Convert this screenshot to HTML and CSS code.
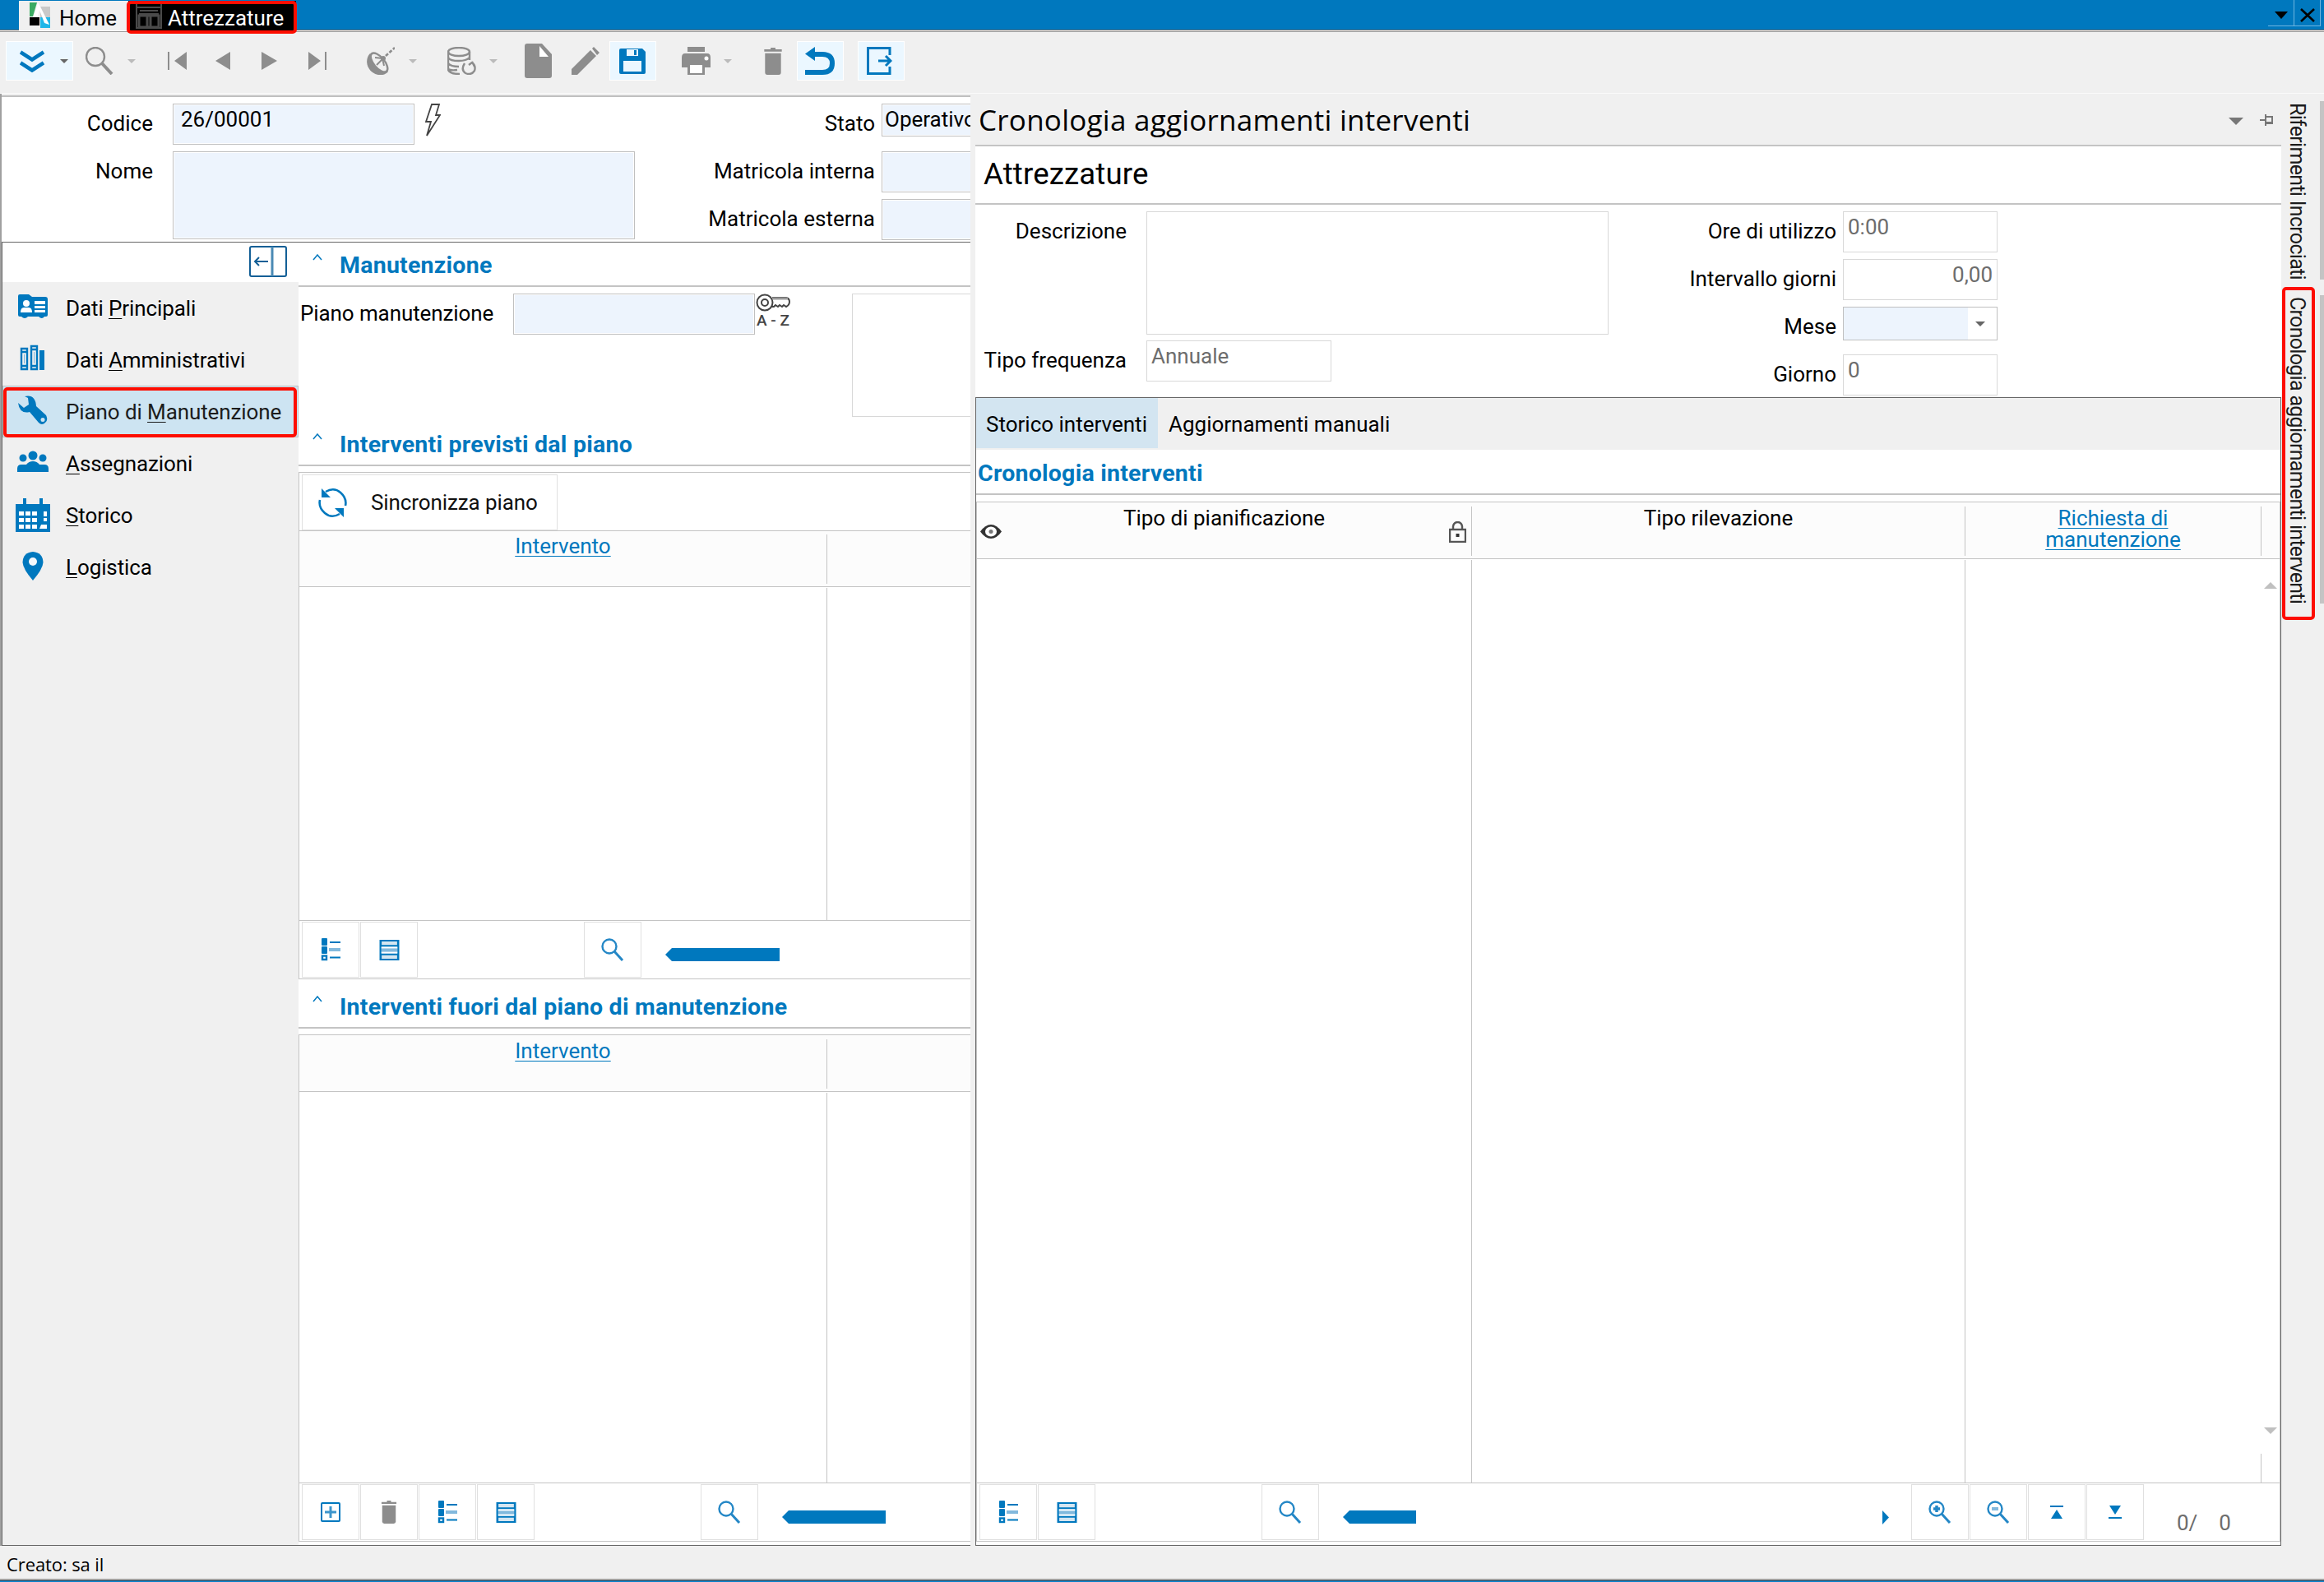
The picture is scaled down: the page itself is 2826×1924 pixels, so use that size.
FILE: index.html
```html
<!DOCTYPE html>
<html lang="it">
<head>
    <meta charset="UTF-8">
    <meta name="viewport" content="width=device-width, initial-scale=1.0">
    <title>Attrezzature</title>
    <link rel="stylesheet" href="styles.css">
</head>
<body>
    <!-- Icons used more than once -->
    <svg class="sprite">
        <symbol id="i-list" viewBox="0 0 24 28">
            <path d="M2 1h5v7H2zM2 11h5v7H2z" fill="#0078be" stroke="#0078be" stroke-width="2" stroke-linejoin="round"/>
            <rect x="2" y="21.500" width="5" height="4.500" fill="none" stroke="#0078be" stroke-width="2.400"/>
            <path d="M11 5h13M11 23.500h13" stroke="#0078be" stroke-width="2"/>
            <path d="M10 14h14" stroke="#82b9dd" stroke-width="4"/>
        </symbol>
        <symbol id="i-table" viewBox="0 0 24 24">
            <path d="M2 1h20v22H2z" fill="#d5e6f1" stroke="#0078be" stroke-width="2"/>
            <path d="M2 10h20M2 14h20" stroke="#fff" stroke-width="4"/>
            <path d="M2 12h20" stroke="#82b9dd" stroke-width="4"/>
            <path d="M1 7h22M1 17h22" stroke="#0078be" stroke-width="2"/>
            <path d="M1.500 0v24M22.500 0v24" stroke="#0078be" stroke-width="2"/>
        </symbol>
        <symbol id="i-search" viewBox="0 0 28 28">
            <circle cx="10" cy="10" r="8.500" fill="none" stroke="#2487c6" stroke-width="2.400"/>
            <path d="M16 16l10 11" stroke="#2487c6" stroke-width="3"/>
        </symbol>
        <symbol id="i-trash" viewBox="0 0 24 34">
            <path d="M9 0h6v2h8v3H1V2h8z" fill="#8d8d8d"/>
            <path d="M2 7h20v24q0 3-3 3H5q-3 0-3-3z" fill="#8d8d8d"/>
        </symbol>
    </svg>

    <!-- Document tabs -->
    <header class="titlebar">
        <div class="tab">
            <svg width="25" height="31" viewBox="0 0 25 31"><path d="M0 0h9L4 17H0z" fill="#3bab62"/><path d="M13 5h12v13H13z" fill="#c9c9c9"/><path d="M0 18h12v10H0z" fill="#000"/><path d="M13 18h12v13H13z" fill="#1fb6e8"/><path d="M10 0L5 17h5l2-8 6 16 6 2L13 5z" fill="#fff"/></svg>
            <span>Home</span>
        </div>
        <div class="tab tab-active">
            <svg width="32" height="30" viewBox="0 0 32 30" fill="none" stroke="#4a4a4a" stroke-width="2"><path d="M1 0v29h30V0M1 4h30M5 8h22M4 12h24"/><path d="M4 14h24v14H4zM14 14v14M18 14v14" stroke-width="3"/></svg>
            <span>Attrezzature</span>
        </div>
        <div class="win-buttons">
            <div class="win-button"><svg width="16" height="9" viewBox="0 0 16 9"><path d="M0 0h16L8 9z"/></svg></div>
            <div class="win-button"><svg width="18" height="17" viewBox="0 0 18 17" fill="none" stroke="#000" stroke-width="2.600"><path d="M1 1l16 15M17 1L1 16"/></svg></div>
        </div>
    </header>

    <!-- Main toolbar -->
    <nav class="toolbar">
        <div class="tool tool-on tool-menu">
            <svg width="30" height="27" viewBox="0 0 30 27" fill="none" stroke="#0078be" stroke-width="4.600"><path d="M1 2.500l14 9 14-9M1 15.500l14 9 14-9"/></svg>
            <i class="caret dark"></i>
        </div>
        <div class="tool tool-find">
            <svg width="34" height="34" viewBox="0 0 34 34" fill="none" stroke="#8d8d8d"><circle cx="12" cy="12" r="11" stroke-width="2.400"/><path d="M20 20l12 13" stroke-width="4"/></svg>
            <i class="caret"></i>
        </div>
        <svg class="tool-first" width="23" height="22" viewBox="0 0 23 22" fill="#8d8d8d"><path d="M0 0h2v22H0zM23 0v22L8 11z"/></svg>
        <svg class="tool-prev" width="18" height="22" viewBox="0 0 18 22" fill="#8d8d8d"><path d="M18 0v22L0 11z"/></svg>
        <svg class="tool-next" width="19" height="22" viewBox="0 0 19 22" fill="#8d8d8d"><path d="M0 0l19 11L0 22z"/></svg>
        <svg class="tool-last" width="22" height="22" viewBox="0 0 22 22" fill="#8d8d8d"><path d="M0 0l15 11L0 22zM20 0h2v22h-2z"/></svg>
        <div class="tool tool-dish">
            <svg width="34" height="34" viewBox="0 0 34 34"><path d="M4 8C-2 14-1 25 7 31c7 5 15 4 19-1z" fill="#8d8d8d"/><ellipse cx="15" cy="19" rx="6.500" ry="14" transform="rotate(-40 15 19)" fill="#f0f0f0" stroke="#8d8d8d" stroke-width="2.400"/><path d="M12 22l8-8M10 13l9 1 2 9" fill="none" stroke="#8d8d8d" stroke-width="2"/><circle cx="20" cy="14" r="3" fill="#8d8d8d"/><path d="M23 11L34 1" stroke="#8d8d8d" stroke-width="2.600" stroke-dasharray="4 2"/></svg>
            <i class="caret"></i>
        </div>
        <div class="tool tool-db">
            <svg width="35" height="34" viewBox="0 0 35 34" fill="none" stroke="#8d8d8d" stroke-width="2.400"><ellipse cx="14" cy="6" rx="13" ry="5"/><path d="M1 6v22q2 5 14 5M27 6v10M1 13q2 4 13 4 9 0 13-4M1 20q3 4 13 4M1 27q3 2 11 1"/><path d="M21 20q-5 8 1 12 7 3 11-3 2-6-3-10l-4 3m4-4l3 6"/></svg>
            <i class="caret"></i>
        </div>
        <svg class="tool-doc" width="33" height="42" viewBox="0 0 33 42"><path d="M3 0h18l12 13v26q0 3-3 3H3q-3 0-3-3V3q0-3 3-3z" fill="#8d8d8d"/><path d="M18 3l11 13H18z" fill="#fff"/></svg>
        <svg class="tool-pen" width="35" height="34" viewBox="0 0 35 34" fill="#8d8d8d"><path d="M0 34v-7L23 4l7 7L7 34zM25 2l2-2 7 7-3 3z"/></svg>
        <div class="tool tool-on tool-save">
            <svg width="32" height="31" viewBox="0 0 32 31"><path d="M2 0h26l4 4v25q0 2-2 2H2q-2 0-2-2V2q0-2 2-2z" fill="#0078be"/><path d="M9 1h14v8H9zM5 15h22v13H5z" fill="#ebf7ff"/><path d="M18 2h3v6h-3z" fill="#0078be"/></svg>
        </div>
        <div class="tool tool-print">
            <svg width="35" height="34" viewBox="0 0 35 34"><path d="M7 0h21v6H7zM4 8h27q4 0 4 5v12h-7v9H7v-9H0V13q0-5 4-5z" fill="#8d8d8d"/><path d="M10 22h15v10H10z" fill="#fff"/><circle cx="30" cy="14" r="2.500" fill="#fff"/></svg>
            <i class="caret"></i>
        </div>
        <svg class="tool-trash" width="24" height="33"><use href="#i-trash"/></svg>
        <div class="tool tool-on tool-undo">
            <svg width="36" height="35" viewBox="0 0 36 35"><path d="M0 8.500L12 0v17z" fill="#0078be"/><path d="M9 9h12q12 0 12 11t-12 11H0" fill="none" stroke="#0078be" stroke-width="6"/></svg>
        </div>
        <div class="tool tool-on tool-exit">
            <svg width="31" height="34" viewBox="0 0 31 34" fill="none" stroke="#0078be" stroke-width="3"><path d="M28 10V1.500H1.500v31H28V24"/><path d="M14 17h15M23 11l6 6-6 6" /></svg>
        </div>
    </nav>

    <main class="main">
        <section class="left">
            <!-- Record header -->
            <div class="record">
                <label class="label">Codice</label>
                <div class="code-cell">
                    <div class="input code">26/00001</div>
                    <svg width="19" height="41" viewBox="0 0 19 41" fill="none" stroke="#444" stroke-width="1.800"><path d="M8 1h9l-4 13h5L2 39l5-17H1z"/></svg>
                </div>
                <label class="label near">Stato</label>
                <div class="input state">Operativo</div>
                <label class="label">Nome</label>
                <div class="input name"></div>
                <label class="label near">Matricola interna</label>
                <div class="input cut"></div>
                <label class="label near">Matricola esterna</label>
                <div class="input cut"></div>
            </div>

            <div class="work">
                <aside class="sidebar">
                    <div class="collapse">
                        <svg width="46" height="38" viewBox="0 0 46 38" fill="none" stroke="#135f96" stroke-width="2"><rect x="1" y="1" width="44" height="36" rx="2"/><path d="M28 1v36" stroke="#4a8ab4" stroke-width="3"/><path d="M7 19h16M12 14l-5 5 5 5"/></svg>
                    </div>
                    <a class="item">
                        <svg width="42" height="42" viewBox="0 0 42 42"><path d="M3 6q0-2 2-2h11l4 3h16q3 0 3 3v19q0 2-2 2h-2q-3 4-7 0H15q-4 4-8 0H5q-2 0-2-2z" fill="#0078be"/><circle cx="13" cy="15" r="4" fill="#fff"/><path d="M6 26q0-6 4-6h6q4 0 4 6zM23 12h13v4H23zM23 18h13v3H23zM23 23h13v3H23z" fill="#fff"/></svg>
                        <span>Dati <u>P</u>rincipali</span>
                    </a>
                    <a class="item">
                        <svg width="42" height="42" viewBox="0 0 42 42" fill="none" stroke="#0078be" stroke-width="2.400"><path d="M7 7h7v25H7zM19 4h7v28h-7zM7 11h7M7 28h7M19 8h7M19 28h7"/><path d="M32 9v24" stroke-width="6"/><path d="M10.500 14v11M22.500 11v14" stroke="#7ab5db" stroke-width="1"/></svg>
                        <span>Dati <u>A</u>mministrativi</span>
                    </a>
                    <a class="item item-on">
                        <svg width="42" height="42" viewBox="0 0 42 42"><path d="M3 10l7 6 6-4-1-8-4-2Q24-1 25 14l12 11q3 6-1 9-4 4-8 0L17 21Q5 24 3 10z" fill="#0078be"/><circle cx="33" cy="30.500" r="2.500" fill="#cde4f2"/></svg>
                        <span>Piano di <u>M</u>anutenzione</span>
                    </a>
                    <a class="item">
                        <svg width="42" height="42" viewBox="0 0 42 42" fill="#0078be"><circle cx="21" cy="11" r="5.500"/><circle cx="9" cy="14" r="4.500"/><circle cx="33" cy="14" r="4.500"/><path d="M2 31v-4q0-5 5-5h6q3-4 8-4t8 4h6q5 0 5 5v4z"/></svg>
                        <span><u>A</u>ssegnazioni</span>
                    </a>
                    <a class="item">
                        <svg width="42" height="42" viewBox="0 0 42 42"><path d="M0 7h9V0h4v7h16V0h4v7h9v34H0z" fill="#0078be"/><path d="M4 16h6v5H4zM12 16h6v5h-6zM20 16h6v5h-6zM4 24h6v5H4zM12 24h6v5h-6zM20 24h6v5h-6zM4 32h6v5H4zM12 32h6v5h-6zM20 32h6v5h-6zM34 16h4v6h-4zM34 24h4v4h-4zM31 32h7v5h-9z" fill="#fff"/></svg>
                        <span><u>S</u>torico</span>
                    </a>
                    <a class="item">
                        <svg width="42" height="42" viewBox="0 0 42 42"><path d="M21 2q12 1 12.500 13Q33 23 21 37 9 23 8.500 15 9 3 21 2z" fill="#0078be"/><circle cx="21" cy="14" r="5" fill="#f4f8fb"/></svg>
                        <span><u>L</u>ogistica</span>
                    </a>
                </aside>

                <div class="content">
                    <h2 class="section"><svg width="12" height="8" viewBox="0 0 12 8"><path d="M1 7l5-6 5 6"/></svg>Manutenzione</h2>
                    <div class="plan">
                        <label class="plan-label">Piano manutenzione</label>
                        <div class="input plan-input"></div>
                        <div class="key">
                            <svg width="42" height="22" viewBox="0 0 42 22" fill="none" stroke="#444" stroke-width="2"><circle cx="11" cy="11" r="9.500"/><circle cx="11" cy="11" r="4"/><path d="M20 5h17q4 1 4 5t-4 6l-3-2-2 2-3-2-2 2-3-2-2 2h-3"/><path d="M20 6h19" stroke="#999" stroke-width="3"/></svg>
                            <span>A - Z</span>
                        </div>
                        <div class="plan-note"></div>
                    </div>

                    <h2 class="section"><svg width="12" height="8" viewBox="0 0 12 8"><path d="M1 7l5-6 5 6"/></svg>Interventi previsti dal piano</h2>
                    <div class="grid grid-top">
                        <div class="grid-actions">
                            <button class="sync">
                                <svg width="37" height="37" viewBox="0 0 37 37" fill="none" stroke="#0078be" stroke-width="2.600"><path d="M10 5q10-6 18 1 8 7 6 16M27 32q-10 6-18-1-8-7-6-16"/><path d="M5 1v11h11zM32 36V25H21z" fill="#0078be" stroke="none"/></svg>
                                Sincronizza piano
                            </button>
                        </div>
                        <div class="grid-head"><div class="th w-int"><a class="link">Intervento</a></div></div>
                        <div class="grid-body"><div class="td w-int"></div></div>
                        <div class="grid-foot">
                            <button class="gbtn"><svg width="24" height="28"><use href="#i-list"/></svg></button>
                            <button class="gbtn"><svg width="25" height="25"><use href="#i-table"/></svg></button>
                            <button class="gbtn gap-a"><svg width="28" height="28"><use href="#i-search"/></svg></button>
                            <div class="scroll scroll-a"></div>
                        </div>
                    </div>

                    <h2 class="section"><svg width="12" height="8" viewBox="0 0 12 8"><path d="M1 7l5-6 5 6"/></svg>Interventi fuori dal piano di manutenzione</h2>
                    <div class="grid grid-bottom">
                        <div class="grid-head"><div class="th w-int"><a class="link">Intervento</a></div></div>
                        <div class="grid-body"><div class="td w-int"></div></div>
                        <div class="grid-foot">
                            <button class="gbtn"><svg width="24" height="24" viewBox="0 0 24 24" fill="none" stroke="#0078be" stroke-width="2"><rect x="1" y="1" width="22" height="22" rx="1"/><path d="M12 5v14M5 12h14" stroke="#3d95cc" stroke-width="3"/></svg></button>
                            <button class="gbtn"><svg width="22" height="28"><use href="#i-trash"/></svg></button>
                            <button class="gbtn"><svg width="24" height="28"><use href="#i-list"/></svg></button>
                            <button class="gbtn"><svg width="25" height="25"><use href="#i-table"/></svg></button>
                            <button class="gbtn gap-a"><svg width="28" height="28"><use href="#i-search"/></svg></button>
                            <div class="scroll scroll-b"></div>
                        </div>
                    </div>
                </div>
            </div>
        </section>

        <!-- Docked panel -->
        <section class="panel">
            <div class="panel-title">
                <span>Cronologia aggiornamenti interventi</span>
                <svg class="panel-caret" width="18" height="9" viewBox="0 0 18 9"><path d="M0 0h18L9 9z" fill="#777"/></svg>
                <svg width="16" height="14" viewBox="0 0 16 14" fill="none" stroke="#777" stroke-width="2"><path d="M0 7h6M7 0v14M8 3h7v8H8"/><path d="M8 10.500h8" stroke-width="3"/></svg>
            </div>
            <div class="panel-name">Attrezzature</div>
            <div class="panel-form">
                <label class="label">Descrizione</label>
                <div class="field desc"></div>
                <label class="label near">Ore di utilizzo</label>
                <div class="field">0:00</div>
                <label class="label near">Intervallo giorni</label>
                <div class="field right">0,00</div>
                <label class="label near">Mese</label>
                <div class="select"><i></i></div>
                <label class="label freq">Tipo frequenza</label>
                <div class="field freq-field">Annuale</div>
                <label class="label near">Giorno</label>
                <div class="field">0</div>
            </div>
            <div class="panel-box">
                <div class="subtabs">
                    <div class="subtab subtab-on">Storico interventi</div>
                    <div class="subtab">Aggiornamenti manuali</div>
                </div>
                <h2 class="panel-section">Cronologia interventi</h2>
                <div class="grid grid-hist">
                    <div class="grid-head">
                        <div class="th w-tipo">
                            <svg class="eye" width="26" height="17" viewBox="0 0 26 17"><path d="M0 8.500Q6 0 13 0t13 8.500Q20 17 13 17T0 8.500z" fill="#333"/><ellipse cx="13" cy="8.500" rx="7" ry="6" fill="#fff"/><circle cx="13" cy="8.500" r="2.500" fill="#777"/></svg>
                            Tipo di pianificazione
                            <svg class="lock" width="21" height="26" viewBox="0 0 21 26" fill="none" stroke="#555" stroke-width="2.400"><rect x="1" y="10" width="19" height="15"/><path d="M5 10V6q1-5 5.500-5T16 6v4"/><rect x="8.500" y="15" width="4" height="4" fill="#333" stroke="none"/></svg>
                        </div>
                        <div class="th w-ril">Tipo rilevazione</div>
                        <div class="th w-rich"><a class="link">Richiesta di<br>manutenzione</a></div>
                    </div>
                    <div class="grid-body">
                        <div class="td w-tipo"></div>
                        <div class="td w-ril"></div>
                        <div class="td w-rich"></div>
                        <div class="vscroll">
                            <svg width="16" height="8" viewBox="0 0 16 8"><path d="M0 8h16L8 0z" fill="#c0c0c0"/></svg>
                            <svg width="16" height="8" viewBox="0 0 16 8"><path d="M0 0h16L8 8z" fill="#c0c0c0"/></svg>
                        </div>
                    </div>
                    <div class="grid-foot">
                        <button class="gbtn"><svg width="24" height="28"><use href="#i-list"/></svg></button>
                        <button class="gbtn"><svg width="25" height="25"><use href="#i-table"/></svg></button>
                        <button class="gbtn gap-a"><svg width="28" height="28"><use href="#i-search"/></svg></button>
                        <div class="scroll scroll-c"></div>
                        <svg class="scroll-end" width="8" height="17" viewBox="0 0 8 17"><path d="M0 0l8 8.500L0 17z" fill="#0078be"/></svg>
                        <button class="gbtn"><svg width="28" height="28" viewBox="0 0 28 28" fill="none" stroke="#2487c6"><circle cx="10" cy="10" r="8.500" stroke-width="2.400"/><path d="M16 16l10 11" stroke-width="3"/><path d="M10 6v8M6 10h8" stroke-width="3.500"/></svg></button>
                        <button class="gbtn"><svg width="28" height="28" viewBox="0 0 28 28" fill="none" stroke="#2487c6"><circle cx="10" cy="10" r="8.500" stroke-width="2.400"/><path d="M16 16l10 11" stroke-width="3"/><path d="M6 10h8" stroke="#82b9dd" stroke-width="4"/></svg></button>
                        <button class="gbtn"><svg width="16" height="16" viewBox="0 0 16 16" fill="#0078be"><path d="M0 0h16v2H0zM8 5l7 11H1z"/></svg></button>
                        <button class="gbtn"><svg width="16" height="16" viewBox="0 0 16 16" fill="#0078be"><path d="M0 14h16v2H0zM8 11l7-11H1z"/></svg></button>
                        <div class="count"><span>0/</span><span>0</span></div>
                    </div>
                </div>
            </div>
        </section>

        <!-- Side tabs -->
        <aside class="sidetabs">
            <div class="sidetab first"><span>Riferimenti Incrociati</span></div>
            <div class="sidetab second"><span>Cronologia aggiornamenti interventi</span></div>
        </aside>
    </main>

    <footer class="status">Creato: sa il</footer>
</body>
</html>
```

FILE: styles.css
```css
*,
*::after {
    box-sizing: border-box;
}
body {
    margin: 0;
    width: 2826px;
    height: 1924px;
    overflow: hidden;
    display: flex;
    flex-direction: column;
    background-color: #f0f0f0;
    color: #000;
    font-family: Roboto, sans-serif;
    font-size: 26px;
    line-height: 30px;
}
svg {
    display: block;
    flex: none;
}
.sprite {
    position: absolute;
    width: 0;
    height: 0;
}
h2 {
    margin: 0;
}
button {
    font: inherit;
    color: #111;
    padding: 0;
}

/* title bar */
.titlebar {
    height: 39px;
    flex: none;
    display: flex;
    padding-left: 23px;
    background: linear-gradient(#0078be 36px, #666 36px, #666 37px, #fff 37px, #fff 38px, #999 38px);
}
.tab {
    position: relative;
    width: 133px;
    height: 36px;
    margin-top: 1px;
    display: flex;
    padding-left: 13px;
    background-color: #f0f0f0;
}
.tab svg {
    margin-top: 2px;
}
.tab span {
    margin: 6px 0 0 11px;
}
.tab-active {
    width: 204px;
    padding-left: 9px;
    background-color: #000;
    color: #fff;
}
.tab-active svg {
    margin-top: 4px;
}
.tab-active span {
    margin-left: 7px;
}
.tab-active::after {
    content: "";
    position: absolute;
    left: -2px;
    top: 0;
    width: 207px;
    height: 40px;
    border: 4px solid #fd0d00;
    border-radius: 5px;
}
.win-buttons {
    margin-left: auto;
    margin-right: 4px;
    display: flex;
    height: 32px;
}
.win-button {
    width: 32px;
    display: flex;
    align-items: center;
    justify-content: center;
    padding-top: 5px;
    border-right: 1px solid #6fb5e0;
    border-bottom: 1px solid #6fb5e0;
}

/* toolbar */
.toolbar {
    height: 75px;
    flex: none;
    display: flex;
    align-items: center;
    padding: 0 0 4px 7px;
    border-bottom: 1px solid #fafafa;
}
.tool {
    height: 48px;
    display: flex;
    align-items: center;
}
.tool-on {
    background-color: #ebf7ff;
    border: 1px solid #fff;
}
.caret {
    width: 0;
    height: 0;
    border: 5px solid transparent;
    border-top-color: #bbb;
    border-bottom: 0;
}
.caret.dark {
    border-top-color: #666;
}
.tool-menu {
    width: 82px;
    padding-left: 16px;
    gap: 19px;
}
.tool-find {
    margin-left: 15px;
    gap: 17px;
}
.tool-first {
    margin-left: 39px;
}
.tool-prev {
    margin-left: 35px;
}
.tool-next {
    margin-left: 38px;
}
.tool-last {
    margin-left: 38px;
}
.tool-dish {
    margin-left: 49px;
    gap: 17px;
}
.tool-db {
    margin-left: 37px;
    gap: 16px;
}
.tool-doc {
    margin-left: 33px;
}
.tool-pen {
    margin-left: 24px;
}
.tool-save {
    width: 57px;
    margin-left: 11px;
    padding-left: 11px;
}
.tool-print {
    margin-left: 31px;
    gap: 16px;
}
.tool-trash {
    margin-left: 38px;
}
.tool-undo {
    width: 57px;
    margin-left: 17px;
    padding-left: 9px;
}
.tool-exit {
    width: 57px;
    margin-left: 17px;
    padding-left: 10px;
}

/* main area */
.main {
    height: 1766px;
    flex: none;
    display: flex;
}
.left {
    width: 1180px;
    margin-right: 6px;
    padding-top: 2px;
    display: flex;
    flex-direction: column;
    overflow: hidden;
    border-left: 2px solid #a0a0a0;
}
.record {
    height: 179px;
    flex: none;
    display: grid;
    grid-template-columns: 208px 562px 300px 1fr;
    grid-template-rows: 58px 58px 50px;
    padding-top: 8px;
    background-color: #fff;
    border-top: 2px solid #c0c0c0;
    border-bottom: 1px solid #666;
}
.label {
    padding: 9px 24px 0 0;
    text-align: right;
}
.label.near {
    padding-right: 8px;
}
.input {
    background-color: #edf4fd;
    border: 1px solid #c0c0c0;
    box-shadow: inset 0 0 0 1px #fff;
}
.code-cell {
    display: flex;
    gap: 13px;
}
.code {
    width: 294px;
    height: 50px;
    padding: 3px 9px;
}
.state {
    height: 40px;
    padding: 3px;
    border-right: 0;
}
.name {
    grid-row: span 2;
    height: 107px;
}
.cut {
    height: 50px;
    border-right: 0;
}
.name ~ .label.near {
    grid-column: 3;
}
.work {
    flex: 1;
    display: flex;
    border-left: 1px solid #666;
    border-bottom: 1px solid #666;
}

/* sidebar */
.sidebar {
    width: 360px;
    flex: none;
}
.collapse {
    height: 48px;
    padding: 4px 14px 0 0;
    display: flex;
    justify-content: flex-end;
    background-color: #fff;
}
.item {
    position: relative;
    height: 63px;
    display: flex;
    align-items: center;
    padding-left: 16px;
    letter-spacing: -0.1px;
}
.item span {
    margin-left: 19px;
}
.item u {
    text-decoration-thickness: 1px;
    text-underline-offset: 3px;
}
.item-on {
    background-color: #cde4f2;
    border: 1px solid #c0c0c0;
    padding-left: 15px;
    color: #1c1c1c;
}
.item-on::after {
    content: "";
    position: absolute;
    left: 0;
    top: 1px;
    width: 357px;
    height: 61px;
    border: 4px solid #fd0d00;
    border-radius: 5px;
}

/* content sections */
.content {
    flex: 1;
    min-width: 0;
    background-color: #fff;
}
.section {
    height: 54px;
    display: flex;
    padding: 13px 0 0 17px;
    border-bottom: 2px solid #c4c4c4;
    color: #0078be;
    font-size: 28.5px;
    font-weight: 700;
    letter-spacing: 0.24px;
    white-space: nowrap;
}
.section svg {
    margin: 1px 21px 0 0;
    fill: none;
    stroke: #0078be;
    stroke-width: 1.5;
}
.plan {
    height: 164px;
    display: flex;
    padding: 8px 0 0 2px;
}
.plan-label {
    width: 259px;
    padding-top: 9px;
    letter-spacing: -0.1px;
    white-space: nowrap;
}
.plan-input {
    width: 294px;
    height: 50px;
}
.key {
    width: 42px;
    margin-left: 1px;
    color: #444;
    font-size: 19px;
    font-weight: 500;
    line-height: 22px;
    text-align: center;
    white-space: nowrap;
}
.plan-note {
    flex: 1;
    height: 150px;
    margin-left: 75px;
    border: 1px solid #d8d8d8;
    border-right: 0;
}
.grid {
    display: flex;
    flex-direction: column;
    border: 1px solid #c4c4c4;
    border-right: 0;
}
.grid-top {
    height: 617px;
    margin: 7px 0 6px;
}
.grid-bottom {
    height: 617px;
    margin-top: 7px;
}
.grid-actions {
    height: 71px;
    padding: 2px 3px;
    border-bottom: 1px solid #c4c4c4;
}
.sync {
    width: 311px;
    height: 68px;
    display: flex;
    align-items: center;
    gap: 28px;
    padding-left: 18px;
    background-color: #fff;
    border: 1px solid #e0e0e0;
    letter-spacing: -0.1px;
    white-space: nowrap;
}
.grid-head {
    height: 68px;
    flex: none;
    display: flex;
    padding-top: 4px;
    background-color: #fcfcfc;
    border-bottom: 1px solid #c4c4c4;
}
.grid-bottom .grid-head,
.grid-hist .grid-head {
    height: 69px;
    padding-top: 5px;
}
.th {
    position: relative;
    height: 60px;
    padding-top: 1px;
    border-right: 1px solid #c4c4c4;
    text-align: center;
    line-height: 26px;
}
.grid-body {
    flex: 1;
    display: flex;
    padding-top: 1px;
}
.td {
    border-right: 1px solid #c4c4c4;
}
.w-int {
    width: 642px;
}
.link {
    color: #0078be;
    text-decoration: underline;
    text-decoration-thickness: 1px;
    text-underline-offset: 3px;
}
.grid-foot {
    height: 71px;
    flex: none;
    display: flex;
    padding: 1px 0 0 3px;
    border-top: 1px solid #c4c4c4;
}
.gbtn {
    width: 70px;
    height: 68px;
    margin-right: 1px;
    display: flex;
    align-items: center;
    justify-content: center;
    background-color: #fff;
    border: 1px solid #e0e0e0;
}
.gap-a {
    margin-left: 201px;
}
.scroll {
    height: 16px;
    margin-top: 32px;
    margin-left: 28px;
    background-color: #0078be;
    clip-path: polygon(0 50%, 8px 0, 100% 0, 100% 100%, 8px 100%);
}
.scroll-a {
    width: 139px;
}
.scroll-b {
    width: 126px;
}
.scroll-c {
    width: 89px;
}
.scroll-end {
    margin: 32px 27px 0 567px;
}
.count {
    display: flex;
    gap: 26px;
    padding: 32px 0 0 39px;
    color: #6d6d6d;
}

/* docked panel */
.panel {
    width: 1588px;
    flex: none;
}
.panel-title {
    height: 64px;
    display: flex;
    align-items: flex-start;
    padding: 11px 10px 0 4px;
    border-bottom: 2px solid #c4c4c4;
    font-family: "Open Sans", "Noto Sans", sans-serif;
    font-size: 35px;
    letter-spacing: 0.25px;
    line-height: 42px;
}
.panel-title svg {
    margin-top: 14px;
}
.panel-title .panel-caret {
    margin: 18px 20px 0 auto;
}
.panel-name {
    height: 71px;
    padding: 14px 10px;
    background-color: #fff;
    border-bottom: 2px solid #c4c4c4;
    font-size: 36.6px;
    letter-spacing: 0.15px;
    line-height: 40px;
}
.panel-form {
    height: 234px;
    display: grid;
    grid-template-columns: 208px 562px 285px 188px;
    grid-template-rows: 58px 58px 41px 17px 50px;
    padding-top: 8px;
    background-color: #fff;
}
.panel-form .label.near {
    grid-column: 3;
}
.desc {
    grid-row: span 3;
}
.field {
    height: 50px;
    padding: 3px 5px;
    border: 1px solid #d8d8d8;
    color: #6d6d6d;
}
.field.desc {
    height: 150px;
}
.right {
    text-align: right;
}
.select {
    height: 41px;
    display: flex;
    align-items: center;
    justify-content: flex-end;
    padding-right: 14px;
    border: 1px solid #c0c0c0;
    background: linear-gradient(90deg, #edf4fd 151px, #fff 151px);
}
.select i {
    border: 6px solid transparent;
    border-top-color: #666;
    border-bottom: 0;
}
.panel-form .freq {
    grid-row: 4 / span 2;
    grid-column: 1;
}
.freq-field {
    grid-row: 4 / span 2;
    grid-column: 2;
    width: 225px;
}
.freq-field ~ .near,
.freq-field ~ .field {
    grid-row: 5;
}
.panel-box {
    height: 1397px;
    background-color: #fff;
    border: 1px solid #666;
}
.subtabs {
    height: 63px;
    display: flex;
    background-color: #f0f0f0;
}
.subtab {
    height: 61px;
    padding: 17px 12px 0 13px;
}
.subtab-on {
    width: 221px;
    padding-left: 12px;
    background-color: #d3e5f1;
    white-space: nowrap;
}
.panel-section {
    height: 55px;
    padding: 14px 2px 0;
    border-bottom: 2px solid #c4c4c4;
    color: #0078be;
    font-size: 28.5px;
    font-weight: 700;
    letter-spacing: 0.24px;
}
.grid-hist {
    height: 1265px;
    margin-top: 8px;
    border-right: 1px solid #c4c4c4;
}
.w-tipo {
    width: 602px;
}
.w-ril {
    width: 600px;
}
.w-rich {
    width: 360px;
}
.eye {
    position: absolute;
    left: 4px;
    top: 22px;
}
.lock {
    position: absolute;
    right: 6px;
    top: 18px;
}
.grid-body .w-rich {
    height: 35px;
    align-self: flex-end;
}
.vscroll {
    display: flex;
    flex-direction: column;
    justify-content: space-between;
    padding: 27px 0 59px 3px;
}

/* side tabs */
.sidetabs {
    width: 52px;
    padding-top: 9px;
}
.sidetab {
    position: relative;
    writing-mode: vertical-rl;
    width: 52px;
    padding: 2px 14px 0 0;
    border-right: 5px solid #c4c4c4;
    color: #1c1c1c;
    font-size: 25px;
    letter-spacing: -0.7px;
    line-height: 28px;
    white-space: nowrap;
}
.first {
    height: 217px;
    margin-bottom: 19px;
}
.second {
    height: 375px;
}
.second::after {
    content: "";
    position: absolute;
    left: 1px;
    top: -10px;
    width: 40px;
    height: 405px;
    border: 4px solid #fd0d00;
    border-radius: 5px;
}

/* status bar */
.status {
    height: 44px;
    flex: none;
    padding: 7px 8px 0;
    background: linear-gradient(transparent 40px, #a0a0a0 40px, #a0a0a0 42px, #12486e 42px, #12486e 43px, #0a84d0 43px);
    font-family: "Open Sans", "Noto Sans", sans-serif;
    font-size: 22px;
    letter-spacing: -0.1px;
}
```
